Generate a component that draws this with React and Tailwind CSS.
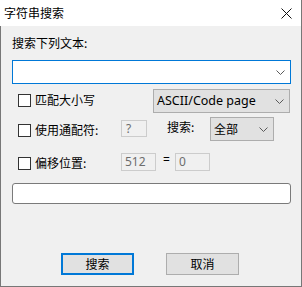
import React from "react";

const cjk = { fontFamily: '"Noto Sans CJK SC", "Noto Sans", sans-serif' };
const latin = { fontFamily: '"Noto Sans", "Noto Sans CJK SC", sans-serif' };

function Chevron({ color = "#5a5a5a" }) {
  return (
    <svg width="9" height="5" viewBox="0 0 9 5" className="shrink-0">
      <path d="M0.5 0.5 L4.5 4.5 L8.5 0.5" fill="none" stroke={color} strokeWidth="1" />
    </svg>
  );
}

function Check({ label }) {
  return (
    <div className="flex items-center h-[16px]">
      <div className="w-[13px] h-[13px] border border-[#333333] bg-white shrink-0" />
      <span className="ml-[4px] text-[12px] leading-[16px] text-black" style={cjk}>
        {label}
      </span>
    </div>
  );
}

export default function App() {
  return (
    <div className="w-[302px] h-[287px] flex flex-col bg-white select-none">
      <div className="h-[26px] flex items-center justify-between bg-white border-r border-[#777777] shrink-0">
        <span className="ml-[4px] text-[12px] leading-[16px] text-black" style={cjk}>
          字符串搜索
        </span>
        <svg width="11" height="11" viewBox="0 0 11 11" className="mr-[9px]">
          <path d="M0.5 0.5 L10.5 10.5 M10.5 0.5 L0.5 10.5" stroke="#111" strokeWidth="1" fill="none" />
        </svg>
      </div>
      <div className="flex-1 bg-[#f0f0f0] border-x border-b border-[#777777] pl-[11px] flex flex-col">
        <div className="mt-[9px] h-[16px] text-[12px] leading-[16px] text-black" style={cjk}>
          搜索下列文本:
        </div>
        <div className="mt-[9px] w-[279px] h-[24px] border border-[#0078d7] bg-white flex items-center justify-end pr-[5px]">
          <Chevron />
        </div>

        <div className="mt-[5px] h-[24px] flex items-start">
          <div className="w-[141px] pl-[6px] mt-[3px]">
            <Check label="匹配大小写" />
          </div>
          <div className="w-[137px] h-[24px] border border-[#adadad] bg-[#e1e1e1] flex items-center justify-between pl-[3px] pr-[5px]">
            <span className="text-[12.5px] leading-[16px] text-black" style={latin}>
              ASCII/Code page
            </span>
            <Chevron />
          </div>
        </div>

        <div className="mt-[4px] h-[24px] flex items-start">
          <div className="w-[109px] pl-[6px] mt-[5px]">
            <Check label="使用通配符:" />
          </div>
          <div className="mt-[3px] w-[26px] h-[17px] border border-[#cccccc] bg-[#f0f0f0] flex items-center pl-[4px]">
            <span className="text-[12px] leading-[14px] text-[#6d6d6d]" style={latin}>?</span>
          </div>
          <div className="ml-[20px] w-[43px] mt-[2px] text-[12px] leading-[16px] text-black" style={cjk}>
            搜索:
          </div>
          <div className="w-[64px] h-[24px] border border-[#adadad] bg-[#e1e1e1] flex items-center justify-between pl-[3px] pr-[5px]">
            <span className="text-[12px] leading-[16px] text-black" style={cjk}>全部</span>
            <Chevron />
          </div>
        </div>

        <div className="mt-[12px] h-[18px] flex items-start">
          <div className="w-[109px] pl-[6px] mt-[2px]">
            <Check label="偏移位置:" />
          </div>
          <div className="w-[35px] h-[18px] border border-[#cccccc] bg-[#f0f0f0] flex items-center pl-[3px]">
            <span className="text-[12px] leading-[14px] text-[#6d6d6d]" style={latin}>512</span>
          </div>
          <div className="w-[19px] pl-[7px] text-[12px] leading-[14px] text-black" style={latin}>
            =
          </div>
          <div className="w-[35px] h-[18px] border border-[#cccccc] bg-[#f0f0f0] flex items-center pl-[3px]">
            <span className="text-[12px] leading-[14px] text-[#6d6d6d]" style={latin}>0</span>
          </div>
        </div>

        <div className="mt-[12px] w-[279px] h-[21px] border border-[#7a7a7a] rounded-[3px] bg-white" />

        <div className="mt-[49px] flex items-start pl-[49px] gap-[32px]">
          <div className="w-[73px] h-[22px] border-2 border-[#0078d7] bg-[#e1e1e1] flex items-center justify-center">
            <span className="text-[12px] leading-[16px] text-black" style={cjk}>搜索</span>
          </div>
          <div className="w-[73px] h-[22px] border border-[#adadad] bg-[#e1e1e1] flex items-center justify-center">
            <span className="text-[12px] leading-[16px] text-black" style={cjk}>取消</span>
          </div>
        </div>
      </div>
    </div>
  );
}
